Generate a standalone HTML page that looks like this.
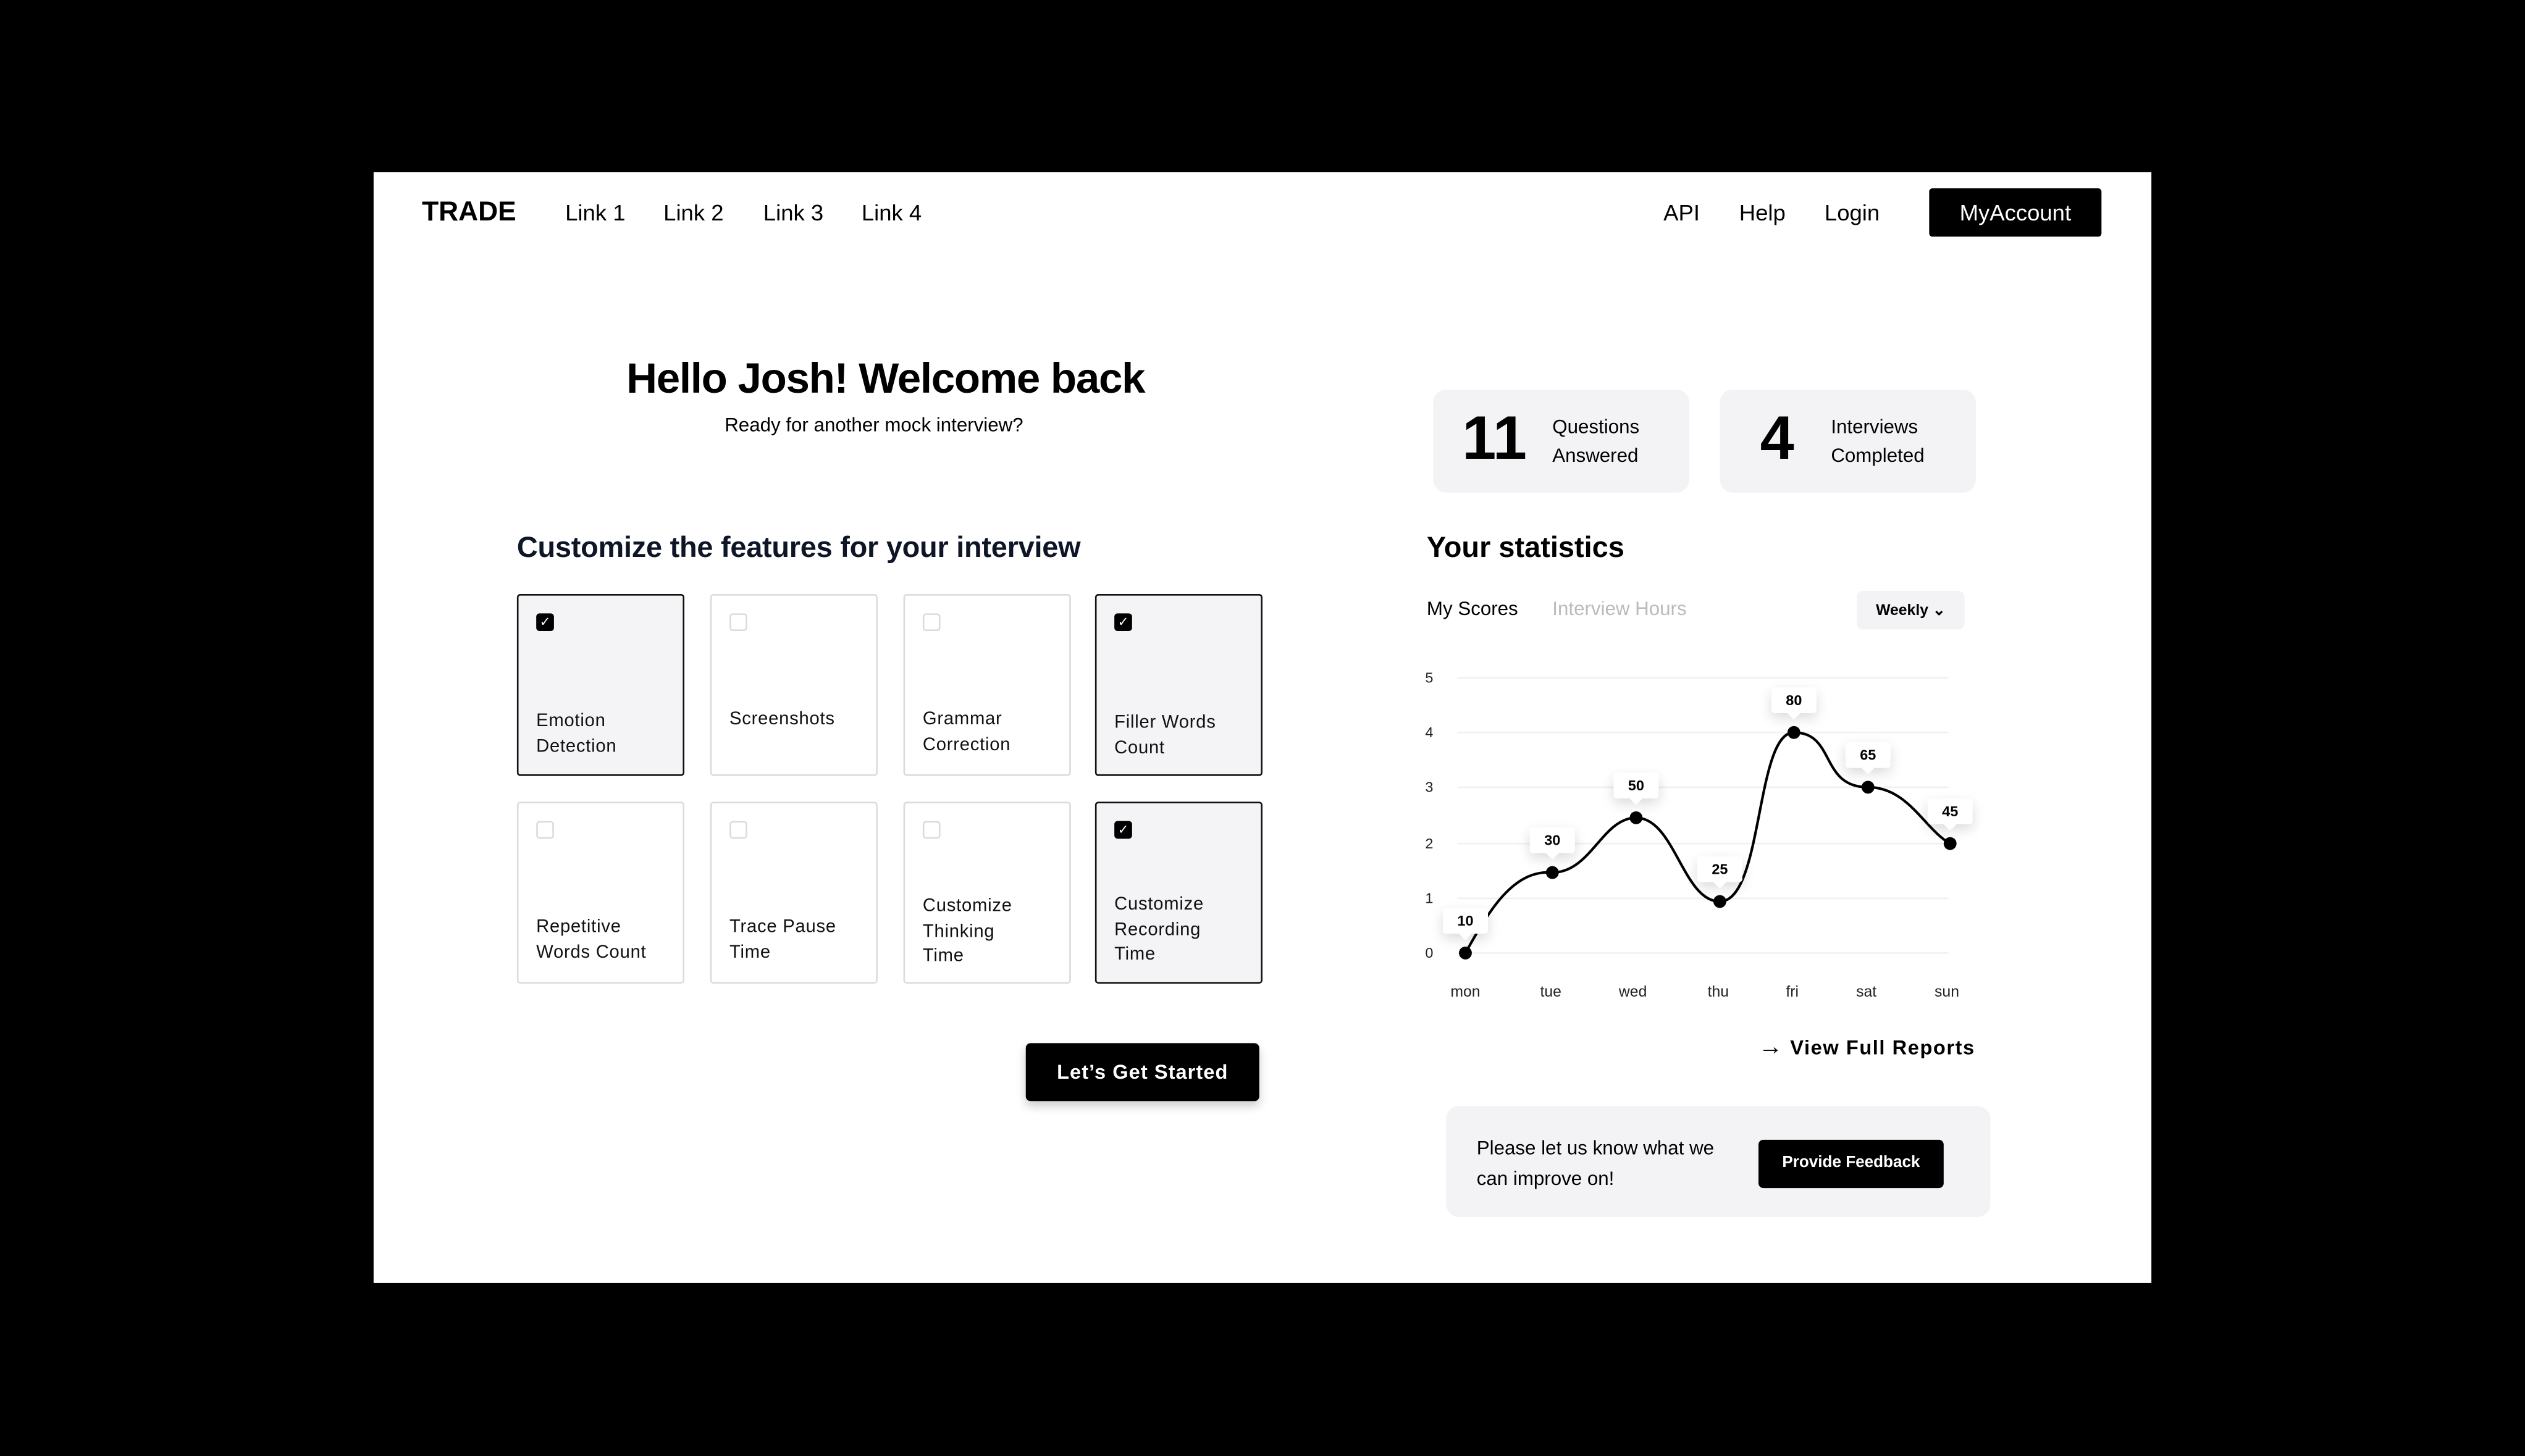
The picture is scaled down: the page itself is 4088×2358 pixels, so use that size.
<!DOCTYPE html>
<html><head><meta charset="utf-8"><style>
html,body{margin:0;padding:0;background:#000;width:4088px;height:2358px;overflow:hidden}
#s{position:absolute;left:0;top:0;width:1568px;height:904px;transform:scale(2.60714);transform-origin:0 0;font-family:"Liberation Sans",sans-serif;color:#000}
.a{position:absolute}
.panel{left:232px;top:107px;width:1104px;height:690px;background:#fff}
.nav{font-size:14px}
.card{position:absolute;width:104px;height:113px;border:1.5px solid #d9dcdf;border-radius:2px;background:#fff;box-sizing:border-box}
.card.on{border:1.5px solid #111;background:#f4f4f6}
.cb{position:absolute;left:11px;top:11px;width:11px;height:11px;border:1px solid #d9dcdf;border-radius:2px;box-sizing:border-box}
.on .cb{background:#000;border-color:#000;color:#fff;font-size:8px;line-height:10px;text-align:center}
.lbl{position:absolute;left:11px;font-size:11.2px;line-height:15.5px;letter-spacing:.3px;color:#111}
.tip{position:absolute;width:28px;height:16px;background:#fff;border-radius:2px;box-shadow:0 3px 8px rgba(0,0,0,.15);font-size:9px;font-weight:bold;text-align:center;line-height:16px}
.tip:after{content:"";position:absolute;left:10px;bottom:-4px;border-left:4px solid transparent;border-right:4px solid transparent;border-top:4px solid #fff}
.yl{position:absolute;left:885px;font-size:9px;color:#222}
.xl{position:absolute;top:611px;font-size:9.5px;color:#222;width:30px;text-align:center}
</style></head><body><div id="s">
<div class="a panel"></div>
<div class="a" style="left:262px;top:122px;font-size:17px;font-weight:bold">TRADE</div>
<div class="a nav" style="left:351px;top:124px">Link 1</div>
<div class="a nav" style="left:412px;top:124px">Link 2</div>
<div class="a nav" style="left:474px;top:124px">Link 3</div>
<div class="a nav" style="left:535px;top:124px">Link 4</div>
<div class="a nav" style="left:1033px;top:124px">API</div>
<div class="a nav" style="left:1080px;top:124px">Help</div>
<div class="a nav" style="left:1133px;top:124px">Login</div>
<div class="a" style="left:1198px;top:117px;width:107px;height:30px;background:#000;border-radius:2px;color:#fff;font-size:14px;line-height:30px;text-align:center">MyAccount</div>

<div class="a" style="left:389px;top:220px;font-size:26.5px;font-weight:bold;letter-spacing:-.5px">Hello Josh! Welcome back</div>
<div class="a" style="left:450px;top:257px;font-size:12px">Ready for another mock interview?</div>
<div class="a" style="left:321px;top:330px;font-size:18px;font-weight:bold;color:#0d1526;letter-spacing:-.1px">Customize the features for your interview</div>

<div class="card on" style="left:321px;top:369px"><div class="cb">✓</div><div class="lbl" style="top:71px">Emotion<br>Detection</div></div>
<div class="card" style="left:441px;top:369px"><div class="cb"></div><div class="lbl" style="top:70px">Screenshots</div></div>
<div class="card" style="left:561px;top:369px"><div class="cb"></div><div class="lbl" style="top:70px">Grammar<br>Correction</div></div>
<div class="card on" style="left:680px;top:369px"><div class="cb">✓</div><div class="lbl" style="top:72px">Filler Words<br>Count</div></div>
<div class="card" style="left:321px;top:498px"><div class="cb"></div><div class="lbl" style="top:70px">Repetitive<br>Words Count</div></div>
<div class="card" style="left:441px;top:498px"><div class="cb"></div><div class="lbl" style="top:70px">Trace Pause<br>Time</div></div>
<div class="card" style="left:561px;top:498px"><div class="cb"></div><div class="lbl" style="top:57px">Customize<br>Thinking<br>Time</div></div>
<div class="card on" style="left:680px;top:498px"><div class="cb">✓</div><div class="lbl" style="top:56px">Customize<br>Recording<br>Time</div></div>

<div class="a" style="left:637px;top:648px;width:145px;height:36px;background:#000;border-radius:3px;color:#fff;font-size:12.5px;font-weight:bold;line-height:37px;text-align:center;letter-spacing:.4px;box-shadow:0 3px 6px rgba(0,0,0,.2)">Let’s Get Started</div>

<div class="a" style="left:890px;top:242px;width:159px;height:64px;background:#f3f3f5;border-radius:8px"></div>
<div class="a" style="left:908px;top:252px;font-size:38px;font-weight:bold">11</div>
<div class="a" style="left:964px;top:256px;font-size:12px;line-height:18px">Questions<br>Answered</div>
<div class="a" style="left:1068px;top:242px;width:159px;height:64px;background:#f3f3f5;border-radius:8px"></div>
<div class="a" style="left:1093px;top:252px;font-size:38px;font-weight:bold">4</div>
<div class="a" style="left:1137px;top:256px;font-size:12px;line-height:18px">Interviews<br>Completed</div>

<div class="a" style="left:886px;top:330px;font-size:18px;font-weight:bold">Your statistics</div>
<div class="a" style="left:886px;top:371px;font-size:12px">My Scores</div>
<div class="a" style="left:964px;top:371px;font-size:12px;color:#bbb">Interview Hours</div>
<div class="a" style="left:1153px;top:367px;width:67px;height:24px;background:#f3f3f5;border-radius:4px;font-size:9.5px;font-weight:bold;line-height:25px;text-align:center">Weekly ⌄</div>

<div class="yl" style="top:416px">5</div><div class="yl" style="top:450px">4</div><div class="yl" style="top:484px">3</div><div class="yl" style="top:519px">2</div><div class="yl" style="top:553px">1</div><div class="yl" style="top:587px">0</div>
<svg class="a" style="left:0;top:0" width="1568" height="904">
<g stroke="#f0f0f2" stroke-width="1"><line x1="905" y1="421" x2="1210" y2="421"/><line x1="905" y1="455" x2="1210" y2="455"/><line x1="905" y1="489" x2="1210" y2="489"/><line x1="905" y1="524" x2="1210" y2="524"/><line x1="905" y1="558" x2="1210" y2="558"/><line x1="905" y1="592" x2="1210" y2="592"/></g>
<path d="M910 592 C925 565,940 540,964 542 C988 542,995 508,1016 508 C1040 508,1045 560,1068 560 C1095 560,1090 455,1114 455 C1140 455,1130 489,1160 489 C1185 489,1195 515,1211 524" fill="none" stroke="#000" stroke-width="1.6"/>
<g fill="#000"><circle cx="910" cy="592" r="4"/><circle cx="964" cy="542" r="4"/><circle cx="1016" cy="508" r="4"/><circle cx="1068" cy="560" r="4"/><circle cx="1114" cy="455" r="4"/><circle cx="1160" cy="489" r="4"/><circle cx="1211" cy="524" r="4"/></g>
</svg>
<div class="tip" style="left:896px;top:564px">10</div>
<div class="tip" style="left:950px;top:514px">30</div>
<div class="tip" style="left:1002px;top:480px">50</div>
<div class="tip" style="left:1054px;top:532px">25</div>
<div class="tip" style="left:1100px;top:427px">80</div>
<div class="tip" style="left:1146px;top:461px">65</div>
<div class="tip" style="left:1197px;top:496px">45</div>
<div class="xl" style="left:895px">mon</div><div class="xl" style="left:948px">tue</div><div class="xl" style="left:999px">wed</div><div class="xl" style="left:1052px">thu</div><div class="xl" style="left:1098px">fri</div><div class="xl" style="left:1144px">sat</div><div class="xl" style="left:1194px">sun</div>

<div class="a" style="left:1092px;top:642px;font-size:12.5px;font-weight:bold;letter-spacing:.6px"><span style="font-size:15px">→</span> View Full Reports</div>

<div class="a" style="left:898px;top:687px;width:338px;height:69px;background:#f3f3f5;border-radius:8px"></div>
<div class="a" style="left:917px;top:704px;font-size:12px;line-height:19px">Please let us know what we<br>can improve on!</div>
<div class="a" style="left:1092px;top:708px;width:115px;height:30px;background:#000;border-radius:3px;color:#fff;font-size:10px;font-weight:bold;line-height:30px;text-align:center">Provide Feedback</div>
</div></body></html>
